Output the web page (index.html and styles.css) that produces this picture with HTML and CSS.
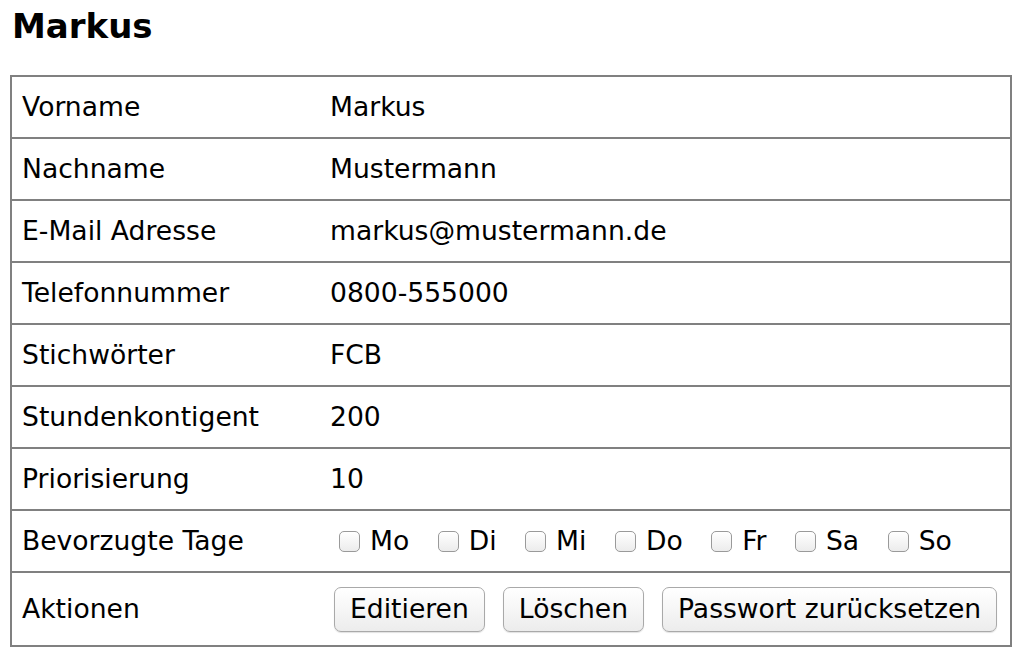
FILE: index.html
```html
<!DOCTYPE html>
<html lang="de">
<head>
<meta charset="utf-8">
<title>Markus</title>
<link rel="stylesheet" href="styles.css">
</head>
<body>
<h1 class="title">Markus</h1>
<table class="details">
  <tr><td class="key">Vorname</td><td>Markus</td></tr>
  <tr><td class="key">Nachname</td><td>Mustermann</td></tr>
  <tr><td class="key">E-Mail Adresse</td><td>markus@mustermann.de</td></tr>
  <tr><td class="key">Telefonnummer</td><td>0800-555000</td></tr>
  <tr><td class="key">Stichwörter</td><td>FCB</td></tr>
  <tr><td class="key">Stundenkontigent</td><td>200</td></tr>
  <tr><td class="key">Priorisierung</td><td>10</td></tr>
  <tr><td class="key">Bevorzugte Tage</td><td>
    <div class="days">
      <label class="day"><input type="checkbox" class="cb">Mo</label>
      <label class="day"><input type="checkbox" class="cb">Di</label>
      <label class="day"><input type="checkbox" class="cb">Mi</label>
      <label class="day"><input type="checkbox" class="cb">Do</label>
      <label class="day"><input type="checkbox" class="cb">Fr</label>
      <label class="day"><input type="checkbox" class="cb">Sa</label>
      <label class="day"><input type="checkbox" class="cb">So</label>
    </div>
  </td></tr>
  <tr class="actions-row"><td class="key">Aktionen</td><td>
    <div class="actions">
      <button class="btn">Editieren</button>
      <button class="btn">Löschen</button>
      <button class="btn">Passwort zurücksetzen</button>
    </div>
  </td></tr>
</table>
</body>
</html>
```
FILE: styles.css
```css
html, body {
  margin: 0;
  padding: 0;
  background: #fff;
}
body {
  padding: 0 10px;
  font-family: "DejaVu Sans", Verdana, sans-serif;
  color: #000;
}
.title {
  font-size: 34px;
  line-height: 40px;
  font-weight: bold;
  margin: 6px 0 29px 2px;
}
.details {
  border-collapse: collapse;
  width: 1002px;
  border: 2px solid #808080;
  font-size: 26.6px;
}
.details td {
  border-top: 2px solid #808080;
  border-bottom: 2px solid #808080;
  height: 60px;
  padding: 0 10px;
  line-height: 30px;
  vertical-align: middle;
  white-space: nowrap;
}
.details td.key {
  width: 288px;
}
.actions-row td {
  height: 72px;
}
.days {
  display: flex;
  align-items: center;
  gap: 19.5px;
}
.day {
  display: flex;
  align-items: center;
}
.cb {
  appearance: none;
  -webkit-appearance: none;
  width: 21px;
  height: 21px;
  margin: 0 10px 0 9px;
  border: 1px solid #9a9a9a;
  border-radius: 5px;
  background: linear-gradient(#ffffff, #ececec);
  box-shadow: inset 0 1px 1px rgba(255,255,255,0.9);
  box-sizing: border-box;
}
.actions {
  display: flex;
  align-items: center;
  gap: 18px;
  padding-left: 4px;
}
.btn {
  font-family: "DejaVu Sans", Verdana, sans-serif;
  font-size: 26.6px;
  height: 45px;
  padding: 0 15px;
  border: 1px solid #a9a9a9;
  border-radius: 7px;
  background: linear-gradient(#ffffff 0%, #f6f6f6 50%, #ececec 100%);
  box-shadow: 0 1px 1px rgba(0,0,0,0.12);
  color: #000;
  line-height: 30px;
}
```
